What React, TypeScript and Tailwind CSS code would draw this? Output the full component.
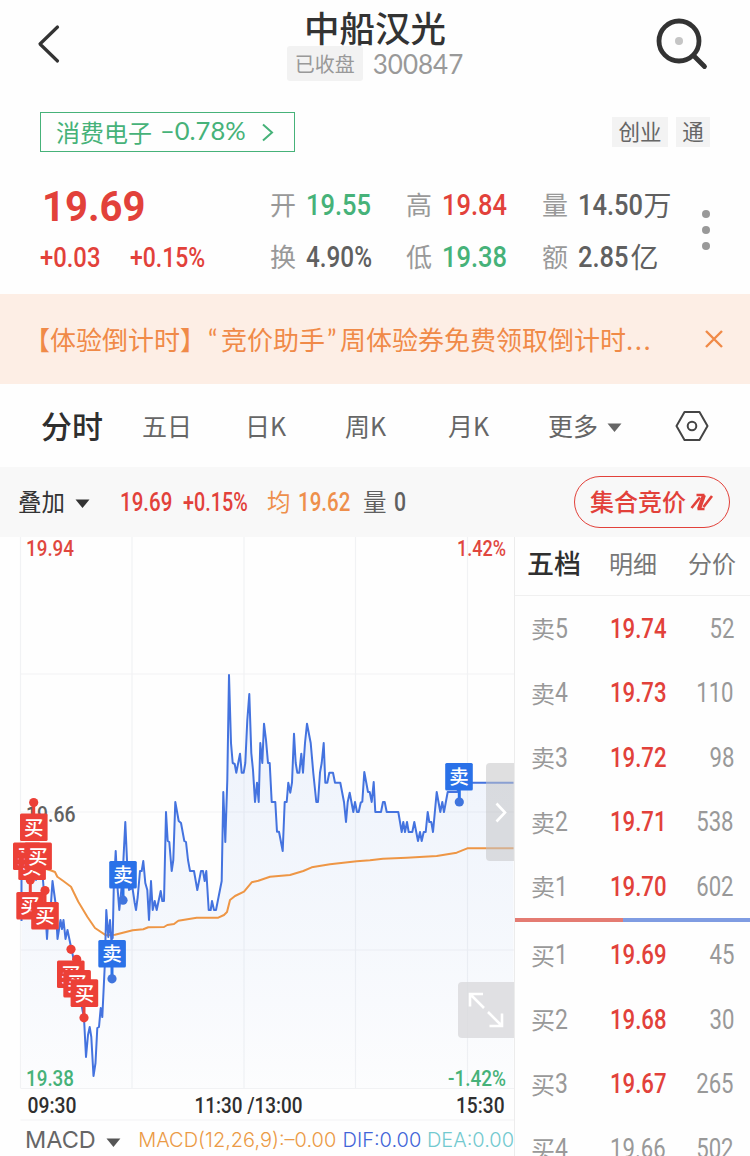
import React from 'react';

type Point = [number, number];

interface Quote {
  label: string;
  price: string;
  volume: string;
  muted?: boolean;
}

const sells: Quote[] = [
  { label: '卖5', price: '19.74', volume: '52' },
  { label: '卖4', price: '19.73', volume: '110' },
  { label: '卖3', price: '19.72', volume: '98' },
  { label: '卖2', price: '19.71', volume: '538' },
  { label: '卖1', price: '19.70', volume: '602' },
];

const buys: Quote[] = [
  { label: '买1', price: '19.69', volume: '45' },
  { label: '买2', price: '19.68', volume: '30' },
  { label: '买3', price: '19.67', volume: '265' },
  { label: '买4', price: '19.66', volume: '502', muted: true },
];

const pricePoints: Point[] = [
  [21.5, 921], [21.5, 870], [25, 860], [28, 880], [32, 870], [36, 880], [40, 870], [43, 880], [45.5, 913], [47, 939],
  [49, 907], [51, 903], [52.5, 881], [55.5, 903], [57.5, 939], [60.5, 920], [62, 929], [63.5, 920], [65.5, 939],
  [67.5, 930], [71, 947], [76, 970], [80, 997], [84, 1018], [86, 1057], [88, 1035], [89.7, 1027], [91.3, 1037],
  [93.5, 1076], [95.5, 1063], [97.3, 1028], [99, 1027], [100.7, 1008], [102.3, 1017], [104.7, 967], [106.3, 910],
  [108.3, 937], [110, 920], [111.3, 940], [112.7, 938], [113.7, 890], [115.7, 851], [117.7, 890], [119.3, 910],
  [121.3, 890], [123.3, 862], [125.3, 822], [127, 860], [129, 890], [132.5, 888], [134.7, 903], [136, 910],
  [137.7, 897], [140, 871], [141.7, 871], [143.3, 861], [145.3, 883], [147.3, 890], [149, 920], [151, 881],
  [152.7, 910], [154.7, 901], [156.7, 910], [160.7, 891], [162.3, 901], [164, 901], [166, 812], [167.7, 841],
  [169.3, 842], [171.7, 871], [173.3, 860], [175.3, 802], [178.7, 821], [181, 823], [184.3, 841], [186, 842],
  [188, 860], [190, 871], [194, 871], [197.3, 890], [201, 871], [203, 871], [204.7, 881], [206.3, 871],
  [208.7, 910], [210.7, 910], [212, 901], [214, 910], [216, 910], [221.7, 881], [223.3, 792], [225.3, 842],
  [227.3, 780], [229, 675], [231, 743], [232.7, 763], [234.7, 764], [236.3, 772.7], [240, 753.7], [241.7, 772.7],
  [243.7, 772.7], [245.3, 763], [247.3, 720], [249.3, 694], [251.3, 753], [253, 770], [255, 802], [257, 782.7],
  [258.7, 802], [260.3, 743], [262.3, 763], [264, 723.7], [266, 740], [268, 763], [269.7, 763], [271.7, 802],
  [275.3, 802], [277, 831.7], [279, 831.7], [282.7, 851], [284.7, 802], [286.7, 802], [288.3, 782.7],
  [290.3, 792.7], [292, 782.7], [294, 733.7], [295.7, 763], [297.3, 772.7], [299.3, 772.7], [301.3, 753.7],
  [303, 772.7], [305, 743], [307, 723.7], [310.7, 743], [313.3, 773], [316.3, 802], [318, 802], [320, 772.7],
  [321.7, 763], [323.7, 743], [325.3, 782.7], [327.3, 782.7], [329.3, 772.7], [333, 772.7], [335, 782.7],
  [340.3, 782.7], [344, 802], [346, 822], [347.7, 802], [349.7, 792.7], [353.3, 812], [355, 802], [357, 812],
  [358.7, 812], [360.7, 802.7], [362.3, 801.7], [364.3, 772], [368, 792], [369.7, 792], [371.7, 802], [373.7, 782],
  [375.3, 812], [381, 812], [383, 802], [384.7, 802], [386.7, 812], [398.3, 812], [401.7, 832], [403.3, 822],
  [405, 832], [407, 822], [408.7, 832], [412.3, 832], [414.3, 822], [418, 841], [420, 832], [421.7, 841],
  [423.7, 832], [425.7, 832], [427.7, 812], [429.3, 822], [431.3, 822], [433, 832], [436.7, 792], [440.3, 812],
  [442.3, 802], [444, 812], [447.7, 792], [457.5, 792], [459.3, 782.7], [513.5, 782.7],
];

const averagePoints: Point[] = [
  [22, 866], [40, 867], [51.7, 870.7], [55, 872], [57.3, 876.7], [63.3, 881], [71, 886.7], [74, 893], [78.3, 901.7],
  [87.3, 916.7], [95, 928], [106, 935.3], [115, 934.7], [132.7, 930.3], [143.3, 929.3], [148.3, 927.3], [164, 927],
  [167.3, 925], [174, 924], [178.3, 920.7], [196.7, 917.7], [218.3, 917.7], [224, 915], [227, 912], [230, 900],
  [235, 896], [244, 891.7], [251.7, 882.3], [258.3, 880.7], [270, 876.7], [290, 875], [303.3, 871], [311.7, 867.3],
  [330, 864.3], [356.7, 861.3], [370, 860.3], [383, 858.7], [406.7, 857.7], [436.7, 856], [456.7, 852.7],
  [467.3, 848.3], [513.5, 848.3],
];

const toPoints = (points: Point[]) => points.map((p) => p.join(',')).join(' ');

// Narrow numerals: the glyphs are squeezed, the parent keeps the slot width.
const Num: React.FC<{ className?: string; right?: boolean; children: React.ReactNode }> = ({ className = '', right, children }) => (
  <span className={`inline-block whitespace-nowrap leading-none font-['Roboto'] ${right ? 'origin-right' : 'origin-left'} ${className}`}>
    {children}
  </span>
);

const Marker: React.FC<{ x: number; y: number; text: string; color: string }> = ({ x, y, text, color }) => (
  <g>
    <rect x={x} y={y} width="27.6" height="27.6" rx="1.5" fill={color} />
    <text x={x + 13.8} y={y + 21.2} fontSize="19.5" fontWeight="500" fill="#fff" textAnchor="middle">{text}</text>
  </g>
);

const ChartLabel: React.FC<{ x: number; y: number; w: number; fill: string; children: string }> = ({ x, y, w, fill, children }) => (
  <text x={x} y={y} textLength={w} lengthAdjust="spacingAndGlyphs" fontSize="22.5" fontWeight="500" fill={fill} className="font-['Roboto']">
    {children}
  </text>
);

const RED = '#ec4037';
const BLUE = '#2a71e8';

const Chart: React.FC = () => (
  <svg className="block h-[583px] w-[514px] overflow-visible" viewBox="0 537 514 583">
    <defs>
      <linearGradient id="area" x1="0" y1="675" x2="0" y2="1088" gradientUnits="userSpaceOnUse">
        <stop offset="0" stopColor="#3f7ae0" stopOpacity="0.09" />
        <stop offset="0.6" stopColor="#3f7ae0" stopOpacity="0.05" />
        <stop offset="1" stopColor="#3f7ae0" stopOpacity="0.01" />
      </linearGradient>
    </defs>
    <g stroke="#f1f2f4" strokeWidth="1.2">
      <path d="M20.5 537V1088M132 537V1088M244 537V1088M355.5 537V1088M467.5 537V1088" />
      <path d="M20.5 674H514M20.5 812H514M20.5 950H514M20.5 1088.5H514M20.5 1120H514" />
    </g>
    <polygon points={`${toPoints(pricePoints)} 513.5,1088 21.5,1088`} fill="url(#area)" />
    <ChartLabel x={26} y={556} w={48} fill="#e0473e">19.94</ChartLabel>
    <ChartLabel x={457} y={556} w={49} fill="#e0473e">1.42%</ChartLabel>
    <ChartLabel x={26} y={821.5} w={49.5} fill="#616161">19.66</ChartLabel>
    <ChartLabel x={26} y={1086} w={48} fill="#46b279">19.38</ChartLabel>
    <ChartLabel x={448} y={1086} w={58} fill="#46b279">-1.42%</ChartLabel>
    <ChartLabel x={27.5} y={1113} w={49} fill="#2f2f2f">09:30</ChartLabel>
    <ChartLabel x={194.5} y={1113} w={108} fill="#2f2f2f">11:30 /13:00</ChartLabel>
    <ChartLabel x={456} y={1113} w={48.5} fill="#2f2f2f">15:30</ChartLabel>

    <polyline points={toPoints(averagePoints)} fill="none" stroke="#ee9645" strokeWidth="2" strokeLinejoin="round" />
    <polyline points={toPoints(pricePoints)} fill="none" stroke="#4473df" strokeWidth="2" strokeLinejoin="round" />

    <g className="font-['Noto_Sans_CJK_SC']">
      <path d="M33.7 802V814M84 1004V1018" stroke={RED} strokeWidth="3" />
      <g fill={RED}>
        <circle cx="33.7" cy="802.5" r="4.6" />
        <circle cx="71" cy="949.3" r="4.6" />
        <circle cx="76.7" cy="959.3" r="4.6" />
        <circle cx="84" cy="1017.8" r="4.6" />
      </g>
      <Marker x={20} y={813.5} text="买" color={RED} />
      <Marker x={13} y={842.5} text="买" color={RED} />
      <Marker x={18.3} y={852.5} text="买" color={RED} />
      <Marker x={24.3} y={842.5} text="买" color={RED} />
      <Marker x={16.3} y={892} text="买" color={RED} />
      <Marker x={31.2} y={902} text="买" color={RED} />
      <circle cx="30.3" cy="880" r="4.6" fill={RED} />
      <circle cx="45" cy="890.5" r="4.6" fill={RED} />
      <path d="M45 890V903M30.3 880V893" stroke={RED} strokeWidth="3" />
      <Marker x={57} y={960.5} text="买" color={RED} />
      <Marker x={63.3} y={970} text="买" color={RED} />
      <Marker x={70.6} y={979.3} text="买" color={RED} />

      <path d="M123 888V900M112 967V979M459.3 790V802" stroke={BLUE} strokeWidth="3" />
      <Marker x={109.2} y={861} text="卖" color={BLUE} />
      <Marker x={98.3} y={940} text="卖" color={BLUE} />
      <Marker x={445.2} y={763} text="卖" color={BLUE} />
      <g fill="#3f74dd">
        <circle cx="123" cy="900.2" r="4.6" />
        <circle cx="112" cy="978.8" r="4.6" />
        <circle cx="459.3" cy="802" r="4.6" />
      </g>
    </g>

    <path d="M514 763H490a4 4 0 0 0-4 4V857a4 4 0 0 0 4 4H514Z" fill="#c4c4c6" fillOpacity="0.55" />
    <path d="M496.5 803.5L505 812.5L496.5 821.5" fill="none" stroke="#fff" strokeWidth="2.6" />
    <path d="M514 982H462a4 4 0 0 0-4 4V1034a4 4 0 0 0 4 4H514Z" fill="#d9dadc" fillOpacity="0.8" />
    <path d="M484 1008L470 994M470 1006.5V994H483M488 1012L502 1026M489.5 1026H502V1013.5" fill="none" stroke="#fff" strokeWidth="2.6" />
  </svg>
);

const QuoteRow: React.FC<{ quote: Quote }> = ({ quote }) => (
  <div className="flex h-[64.5px] items-center pl-[16px] pr-4 text-[#999]">
    <span className="flex w-[79px] items-center text-[24px] leading-none">
      <span className="pb-[2px]">{quote.label[0]}</span>
      <Num className="scale-x-[0.85] text-[27px]">{quote.label[1]}</Num>
    </span>
    <Num className={quote.muted ? 'scale-x-[0.82] text-[27px]' : 'scale-x-[0.82] text-[27px] font-medium text-[#e2413a]'}>{quote.price}</Num>
    <Num right className="ml-auto scale-x-[0.82] text-[27px]">{quote.volume}</Num>
  </div>
);

const Caret: React.FC<{ className?: string }> = ({ className }) => (
  <svg className={`h-[9px] w-[15px] ${className}`} viewBox="0 0 15 9" fill="currentColor">
    <path d="M.5.5H14.5L7.5 9Z" />
  </svg>
);

const Stat: React.FC<{ label: string; value: string; unit?: string; color: string }> = ({ label, value, unit, color }) => (
  <div className="flex h-[52px] items-center text-[26px] leading-none text-[#999]">
    <span className="w-9 shrink-0 pb-[3px]">{label}</span>
    <span className={`flex items-center ${color}`}>
      <Num className={value.endsWith('%') ? 'scale-x-[0.81] text-[30px] font-medium' : 'scale-x-[0.85] text-[30px] font-medium'}>{value}</Num>
      {unit && <span className={value.length > 4 ? '-ml-[11px] pb-[3px] text-[28px]' : '-ml-[7px] pb-[3px] text-[28px]'}>{unit}</span>}
    </span>
  </div>
);

export default function App() {
  return (
    <div className="h-[1156px] w-[750px] overflow-hidden bg-[#fefefe] font-['Noto_Sans_CJK_SC',sans-serif] leading-none text-[#333]">
      <header className="flex h-[112px] justify-between pl-[36px] pr-[38px]">
        <svg className="mt-[24px] h-10 w-[26px]" viewBox="0 0 26 40" fill="none" stroke="#333" strokeWidth="3.2" strokeLinecap="round" strokeLinejoin="round">
          <path d="M21.5 3L4 20L21.5 37" />
        </svg>
        <div className="ml-[32px] flex flex-col items-center">
          <h1 className="mt-[9px] h-[37px] text-[35.5px] font-medium leading-[35px]">中船汉光</h1>
          <div className="flex items-center gap-[10px] text-[#999]">
            <span className="flex h-[35px] w-[76px] items-center justify-center rounded-[3px] bg-[#f2f2f2] text-[20px]">已收盘</span>
            <span className="font-['Lato'] text-[26px] leading-none">300847</span>
          </div>
        </div>
        <svg className="mt-[16px] h-[56px] w-[56px]" viewBox="0 0 56 56" fill="none" stroke="#333" strokeLinecap="round">
          <circle cx="23" cy="25" r="20" strokeWidth="4.8" />
          <path d="M37.5 39.5L48.5 50.5" strokeWidth="4.8" />
          <circle cx="23" cy="25" r="4" fill="#c5c5c5" stroke="none" />
        </svg>
      </header>

      <div className="flex h-10 items-center pl-10 pr-[40px]">
        <div className="flex h-10 w-[255px] items-center border border-[#46b279] pl-[15px] text-[24px] text-[#46b279]">
          <span className="pb-px">消费电子</span>
          <span className="ml-[8px] pb-[2px] font-['Lato'] text-[25.5px]">–0.78%</span>
          <svg className="ml-auto mr-[20px] h-[19px] w-[13px]" viewBox="0 0 13 19" fill="none" stroke="currentColor" strokeWidth="2">
            <path d="M2 1.5L11 9.5L2 17.5" />
          </svg>
        </div>
        <div className="ml-auto flex gap-2 text-[21.5px] text-[#666]">
          <span className="flex h-[30px] w-14 items-center justify-center bg-[#f3f3f3] pb-[2px]">创业</span>
          <span className="flex h-[30px] w-[34px] items-center justify-center bg-[#f3f3f3] pb-[2px]">通</span>
        </div>
      </div>

      <section className="flex h-[142px] pl-10 pt-[27px]">
        <div className="w-[230px] text-[#e2413a]">
          <div className="flex h-[54px] items-center">
            <span className="ml-[2px] inline-block origin-left scale-x-[0.93] font-['Roboto'] text-[43px] font-bold leading-none">19.69</span>
          </div>
          <div className="flex h-[50px] items-center text-[28px] font-medium">
            <span className="flex w-[90px]"><Num className="scale-x-[0.85]">+0.03</Num></span>
            <Num className="scale-x-[0.82]">+0.15%</Num>
          </div>
        </div>
        <div className="grid h-[104px] grid-cols-[136px_136px_150px]">
          <Stat label="开" value="19.55" color="text-[#46b279]" />
          <Stat label="高" value="19.84" color="text-[#e2413a]" />
          <Stat label="量" value="14.50" unit="万" color="text-[#606060]" />
          <Stat label="换" value="4.90%" color="text-[#606060]" />
          <Stat label="低" value="19.38" color="text-[#46b279]" />
          <Stat label="额" value="2.85" unit="亿" color="text-[#606060]" />
        </div>
        <div className="ml-[10px] mt-[31px] flex flex-col gap-2">
          <i className="size-2 rounded-full bg-[#999]" />
          <i className="size-2 rounded-full bg-[#999]" />
          <i className="size-2 rounded-full bg-[#999]" />
        </div>
      </section>

      <div className="flex h-[90px] items-center bg-[#fdeee5] pl-6 pr-[27px] text-[26px] text-[#f08a48]">
        <span className="flex whitespace-nowrap">
          <span>【体验倒计时】</span>
          <span className="w-[15px] pl-[2px] font-['Lato']">“</span>
          <span>竞价助手</span>
          <span className="w-[15px] pl-[2px] font-['Lato']">”</span>
          <span>周体验券免费领取倒计时</span>
          <span className="tracking-[1.5px]">...</span>
        </span>
        <svg className="ml-auto size-[18px] shrink-0" viewBox="0 0 18 18" stroke="currentColor" strokeWidth="2.4">
          <path d="M1 1L17 17M17 1L1 17" />
        </svg>
      </div>

      <nav className="flex h-[83px] items-center pl-[41px] text-[25px] text-[#666]">
        <span className="w-[101px] pb-[3px] text-[31px] font-medium text-[#2f2f2f]">分时</span>
        <span className="w-[103px]">五日</span>
        <span className="w-[100px]">日K</span>
        <span className="w-[103px]">周K</span>
        <span className="w-[100px]">月K</span>
        <span>更多</span>
        <Caret className="ml-[9px] mt-1" />
        <svg className="ml-[53px] h-8 w-[34px]" viewBox="0 0 34 32" fill="none" stroke="#444" strokeWidth="2" strokeLinejoin="round">
          <path d="M9.5 2H24.5L32.5 16L24.5 30H9.5L1.5 16Z" />
          <circle cx="17" cy="16" r="4.3" />
        </svg>
      </nav>

      <div className="flex h-[70px] items-center bg-[#f8f8f8] pl-[18px] pr-5 text-[23.5px]">
        <span>叠加</span>
        <Caret className="ml-[10px] mt-[3px]" />
        <span className="ml-[30px] flex w-[63px] text-[#e2413a]"><Num className="scale-x-[0.82] text-[25px] font-medium">19.69</Num></span>
        <span className="flex w-[84px] text-[#e2413a]"><Num className="scale-x-[0.79] text-[25px] font-medium">+0.15%</Num></span>
        <span className="w-[31px] text-[#ee8f4b]">均</span>
        <span className="flex w-[65px] text-[#ee8f4b]"><Num className="scale-x-[0.82] text-[25px] font-medium">19.62</Num></span>
        <span className="w-[31px] text-[#606060]">量</span>
        <Num className="scale-x-[0.85] text-[25px] font-medium text-[#606060]">0</Num>
        <button className="ml-auto flex h-[52px] w-[156px] shrink-0 items-center rounded-full border border-[#e2413a] pl-[15px] text-[24px] font-medium leading-none text-[#e2413a]">
          <span className="pb-[2px]">集合竞价</span>
          <svg className="ml-[4px] h-[18px] w-[24px]" viewBox="0 0 24 18" fill="none" stroke="currentColor">
            <path d="M1.5 15L10 4.500M13.500 14L22 3" strokeWidth="2.6" />
            <path d="M6.500 2H14.500M7.500 16H14.500" strokeWidth="2.4" />
            <path d="M14 2L9 16" strokeWidth="4" />
          </svg>
        </button>
      </div>

      <main className="flex h-[619px]">
        <div className="w-[514px] shrink-0">
          <Chart />
          <div className="flex h-9 items-center overflow-hidden whitespace-nowrap pl-[25px] pt-1 font-['Inter'] text-[20px] font-light">
            <span className="w-[82px] text-[23.5px] font-normal text-[#666]">MACD</span>
            <Caret className="mt-1 text-[#555]" />
            <span className="ml-[17px] w-[206px] text-[#eb9a45]">MACD(12,26,9):–0.00</span>
            <span className="w-[85px] text-[#4164d8]">DIF:0.00</span>
            <span className="text-[#73c9cf]">DEA:0.00</span>
          </div>
        </div>
        <aside className="h-[619px] w-[236px] overflow-hidden border-l border-[#ececec]">
          <div className="flex h-[59px] items-center border-b border-[#f0f0f0] pb-[7px] pl-[12px] text-[24px] text-[#777]">
            <span className="w-[82px] text-[27px] font-medium text-[#2f2f2f]">五档</span>
            <span className="w-[79px]">明细</span>
            <span>分价</span>
          </div>
          <div className="mt-px">
            {sells.map((q) => <QuoteRow key={q.label} quote={q} />)}
          </div>
          <div className="-mt-[2px] flex h-1">
            <i className="w-[108px] bg-[#e47b72]" />
            <i className="flex-1 bg-[#7f9ce2]" />
          </div>
          <div className="mt-[2px]">
            {buys.map((q) => <QuoteRow key={q.label} quote={q} />)}
          </div>
        </aside>
      </main>
    </div>
  );
}
